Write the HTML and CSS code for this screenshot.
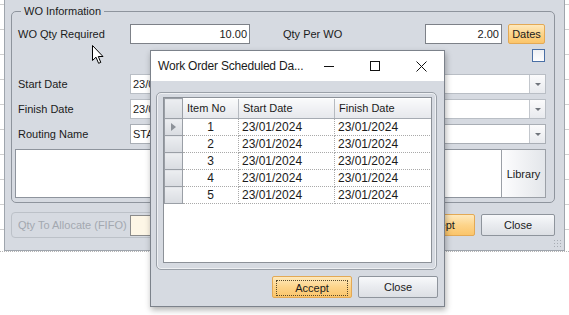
FILE: index.html
```html
<html>
<head>
  <title>WO Information</title>
  <link rel="stylesheet" href="styles.css">
</head>
<body>
  <div class="desktop">
    <div class="surface">
      <div class="panel">
        <fieldset class="group">
          <legend>WO Information</legend>
          <div class="row first">
            <label class="lbl">WO Qty Required</label>
            <div class="textbox qty">10.00</div>
            <label class="lbl per">Qty Per WO</label>
            <div class="textbox per-wo">2.00</div>
            <button class="btn orange dates">Dates</button>
          </div>
          <div class="row check-row">
            <span class="check"></span>
          </div>
          <div class="row combo-row start">
            <label class="lbl">Start Date</label>
            <div class="combo flat"><span class="val">23/01/2024</span><span class="drop"></span></div>
          </div>
          <div class="row combo-row">
            <label class="lbl">Finish Date</label>
            <div class="combo flat"><span class="val">23/01/2024</span><span class="drop"></span></div>
          </div>
          <div class="row combo-row">
            <label class="lbl">Routing Name</label>
            <div class="combo"><span class="val">STANDARD</span><span class="drop"></span></div>
          </div>
          <div class="memo-row">
            <div class="memo"></div>
            <button class="btn library">Library</button>
          </div>
        </fieldset>

        <div class="bottom-row">
          <div class="alloc">
            <label class="lbl disabled">Qty To Allocate (FIFO)</label>
            <div class="textbox cream"></div>
          </div>
          <div class="actions">
            <button class="btn orange">Accept</button>
            <button class="btn">Close</button>
          </div>
        </div>
        <span class="grip"></span>
      </div>
    </div>

    <svg class="cursor" width="13" height="20" viewBox="0 0 13 20">
      <path d="M0.5 0.5 L0.5 15.5 L4 12.2 L6.6 18.3 L8.8 17.4 L6.3 11.5 L11 11.5 Z" fill="#fff" stroke="#000" stroke-width="1"/>
    </svg>

    <div class="dialog">
      <div class="titlebar">
        <span class="title">Work Order Scheduled Da...</span>
        <span class="cap"><span class="min"></span></span>
        <span class="cap"><span class="max"></span></span>
        <span class="cap">
          <svg width="11" height="11" viewBox="0 0 11 11"><path d="M0.5 0.5 L10.5 10.5 M10.5 0.5 L0.5 10.5" stroke="#111" stroke-width="1"/></svg>
        </span>
      </div>
      <div class="dlg-body">
        <div class="grid-box">
          <div class="grid">
            <table>
              <colgroup>
                <col class="c-rh"><col class="c-no"><col class="c-start"><col class="c-finish">
              </colgroup>
              <thead>
                <tr><td class="rh"></td><td>Item No</td><td>Start Date</td><td>Finish Date</td></tr>
              </thead>
              <tbody>
                <tr><td class="rh current"><span class="arrow"></span></td><td class="num">1</td><td>23/01/2024</td><td>23/01/2024</td></tr>
                <tr><td class="rh"></td><td class="num">2</td><td>23/01/2024</td><td>23/01/2024</td></tr>
                <tr><td class="rh"></td><td class="num">3</td><td>23/01/2024</td><td>23/01/2024</td></tr>
                <tr><td class="rh"></td><td class="num">4</td><td>23/01/2024</td><td>23/01/2024</td></tr>
                <tr><td class="rh"></td><td class="num">5</td><td>23/01/2024</td><td>23/01/2024</td></tr>
              </tbody>
            </table>
          </div>
        </div>
        <div class="dlg-actions">
          <button class="btn orange focus"><span>Accept</span></button>
          <button class="btn">Close</button>
        </div>
      </div>
    </div>
  </div>
</body>
</html>
```

FILE: styles.css
```css
body {
  background: #fff;
  color: #1b1b1b;
  font-family: "Liberation Sans", Arial, sans-serif;
  font-size: 11px;
  margin: 0;
}

.desktop {
  height: 315px;
  overflow: hidden;
  position: relative;
  width: 569px;
}

.surface {
  background-image: linear-gradient(to bottom, transparent 4px, #cfcfcf 4px, #cfcfcf 5px, transparent 5px);
  background-size: 100% 25px;
  border-bottom: 1px dotted #b5b5b5;
  height: 251px;
}

.panel {
  background: #d6dae1;
  border-bottom: 1px solid #9fa5ad;
  border-left: 1px solid #9fa5ad;
  border-right: 1px solid #9fa5ad;
  box-sizing: border-box;
  height: 251px;
  margin-left: 4px;
  overflow: hidden;
  position: relative;
  width: 561px;
}

/* main group */
.group {
  border: 1px solid #8e949d;
  border-radius: 5px;
  margin: 4px 9px 0 6px;
  padding: 0 8px 4px 3px;
}
.group legend {
  line-height: 14px;
  margin-left: 6px;
  padding: 0 3px;
}

.row {
  align-items: center;
  display: flex;
  height: 20px;
  padding-left: 3px;
}
.row.first {
  margin-top: 6px;
}
.row.check-row {
  height: 13px;
  justify-content: flex-end;
  margin-top: 5px;
}
.row.combo-row {
  margin-top: 5px;
}
.row.combo-row.start {
  margin-top: 12px;
}

.lbl {
  flex: none;
  width: 112px;
}
.lbl.per {
  margin-left: 33px;
  width: 142px;
}
.lbl.disabled {
  color: #a3a8b0;
}

.textbox {
  background: #fff;
  border: 1px solid #7d8188;
  box-sizing: border-box;
  height: 20px;
  line-height: 18px;
  padding-right: 2px;
  text-align: right;
}
.textbox.qty {
  width: 120px;
}
.textbox.per-wo {
  width: 77px;
}
.textbox.cream {
  background: #fdf6e6;
  border-color: #8b8b8b;
  flex: 1;
  height: 21px;
}

.check {
  background: linear-gradient(#eef0f4, #fdfdfe);
  border: 1px solid #4a6fa5;
  box-sizing: border-box;
  height: 13px;
  margin-right: 1px;
  width: 13px;
}

.combo {
  background: #fff;
  border: 1px solid #a9aeb5;
  box-sizing: border-box;
  display: flex;
  flex: 1;
  height: 20px;
}
.combo.flat {
  border-color: #b9bec5;
}
.combo .val {
  flex: 1;
  line-height: 18px;
  padding-left: 2px;
}
.combo .drop {
  align-items: center;
  background: linear-gradient(#fbfbfc, #e8eaee);
  border-left: 1px solid #c3c7cd;
  display: flex;
  justify-content: center;
  width: 15px;
}
.combo .drop::after {
  border-left: 3px solid transparent;
  border-right: 3px solid transparent;
  border-top: 3px solid #70757c;
  content: "";
}

.memo-row {
  display: flex;
  height: 49px;
  margin-top: 5px;
}
.memo {
  background: #fff;
  border: 1px solid #8e949d;
  border-right: none;
  flex: 1;
}

.btn {
  background: linear-gradient(#f8f9fb, #e9ebef 50%, #dcdfe4);
  border: 1px solid #8e949c;
  border-radius: 2px;
  box-sizing: border-box;
  color: #1b1b1b;
  font-family: "Liberation Sans", Arial, sans-serif;
  font-size: 11px;
  height: 22px;
  padding: 0;
  width: 74px;
}
.btn.orange {
  background: linear-gradient(#fee9bd, #fdd48a 50%, #fbc56a);
  border-color: #e3a955;
}
.btn.dates {
  height: 20px;
  margin-left: 6px;
  width: 37px;
}
.btn.library {
  background: linear-gradient(to right, #fdfdfe, #e3e6ea);
  border-color: #9ba0a7;
  border-radius: 0;
  height: 49px;
  width: 45px;
}

.bottom-row {
  align-items: center;
  display: flex;
  margin: 9px 9px 0 6px;
}
.alloc {
  align-items: center;
  border: 1px solid #bcc1c8;
  border-radius: 4px;
  display: flex;
  height: 24px;
  padding-left: 6px;
  width: 250px;
}
.actions {
  display: flex;
  gap: 6px;
  margin-left: auto;
}

.grip {
  background-image: radial-gradient(circle, #a7acb3 0.8px, transparent 1px);
  background-size: 3px 3px;
  bottom: 2px;
  height: 9px;
  position: absolute;
  right: 2px;
  width: 9px;
}

.cursor {
  left: 92px;
  position: absolute;
  top: 45px;
}

/* dialog */
.dialog {
  background: #d6dae1;
  border: 1px solid #7c828b;
  box-shadow: 1px 3px 6px rgba(0, 0, 0, 0.3);
  box-sizing: border-box;
  height: 257px;
  left: 150px;
  position: absolute;
  top: 50px;
  width: 295px;
}

.titlebar {
  align-items: center;
  background: #fff;
  display: flex;
  height: 30px;
}
.title {
  flex: 1;
  font-size: 12px;
  letter-spacing: -0.2px;
  padding-left: 7px;
}
.cap {
  align-items: center;
  display: flex;
  height: 30px;
  justify-content: center;
  width: 46px;
}
.min {
  border-top: 1px solid #111;
  width: 10px;
}
.max {
  border: 1px solid #111;
  height: 8px;
  width: 8px;
}

.dlg-body {
  padding: 11px 7px 0 5px;
}
.grid-box {
  border: 1px solid #9aa0a8;
  border-radius: 5px;
  box-shadow: inset 0 0 0 1px #eef0f3;
  box-sizing: border-box;
  height: 178px;
  padding: 4px 4px 6px 6px;
}
.grid {
  background: #fff;
  border: 1px solid #8c9198;
  height: 164px;
  overflow: hidden;
}
.grid table {
  border-collapse: collapse;
  font-size: 12px;
  table-layout: fixed;
  width: 267px;
}
.grid col.c-rh { width: 18px; }
.grid col.c-no { width: 56px; }
.grid col.c-start { width: 96px; }
.grid col.c-finish { width: 97px; }

.grid td {
  border-bottom: 1px dotted #a9a9a9;
  border-right: 1px dotted #a9a9a9;
  box-sizing: border-box;
  height: 17px;
  line-height: 14px;
  overflow: hidden;
  padding: 0 0 0 3px;
  white-space: nowrap;
}
.grid thead td {
  background: linear-gradient(#f9fafb, #e6e8ec);
  border-bottom: 1px solid #a6abb2;
  border-right: 1px solid #b6bac0;
  font-size: 11px;
  height: 20px;
  padding-left: 4px;
}
.grid td.num {
  padding: 0;
  text-align: center;
}
.grid td.rh {
  background: linear-gradient(#eceef1, #d9dce1);
  border: 1px solid #9a9fa6;
  padding: 0;
}
.grid .arrow {
  border-bottom: 4px solid transparent;
  border-left: 5px solid #8d9299;
  border-top: 4px solid transparent;
  display: block;
  height: 0;
  margin-left: 6px;
  width: 0;
}

.dlg-actions {
  display: flex;
  gap: 6px;
  justify-content: flex-end;
  margin-right: -1px;
  margin-top: 6px;
}
.dlg-actions .btn {
  width: 80px;
}
.btn.focus {
  padding: 3px;
}
.btn.focus span {
  border: 1px dotted #5a4a2a;
  display: block;
  line-height: 12px;
  padding: 1px 0;
}
```
